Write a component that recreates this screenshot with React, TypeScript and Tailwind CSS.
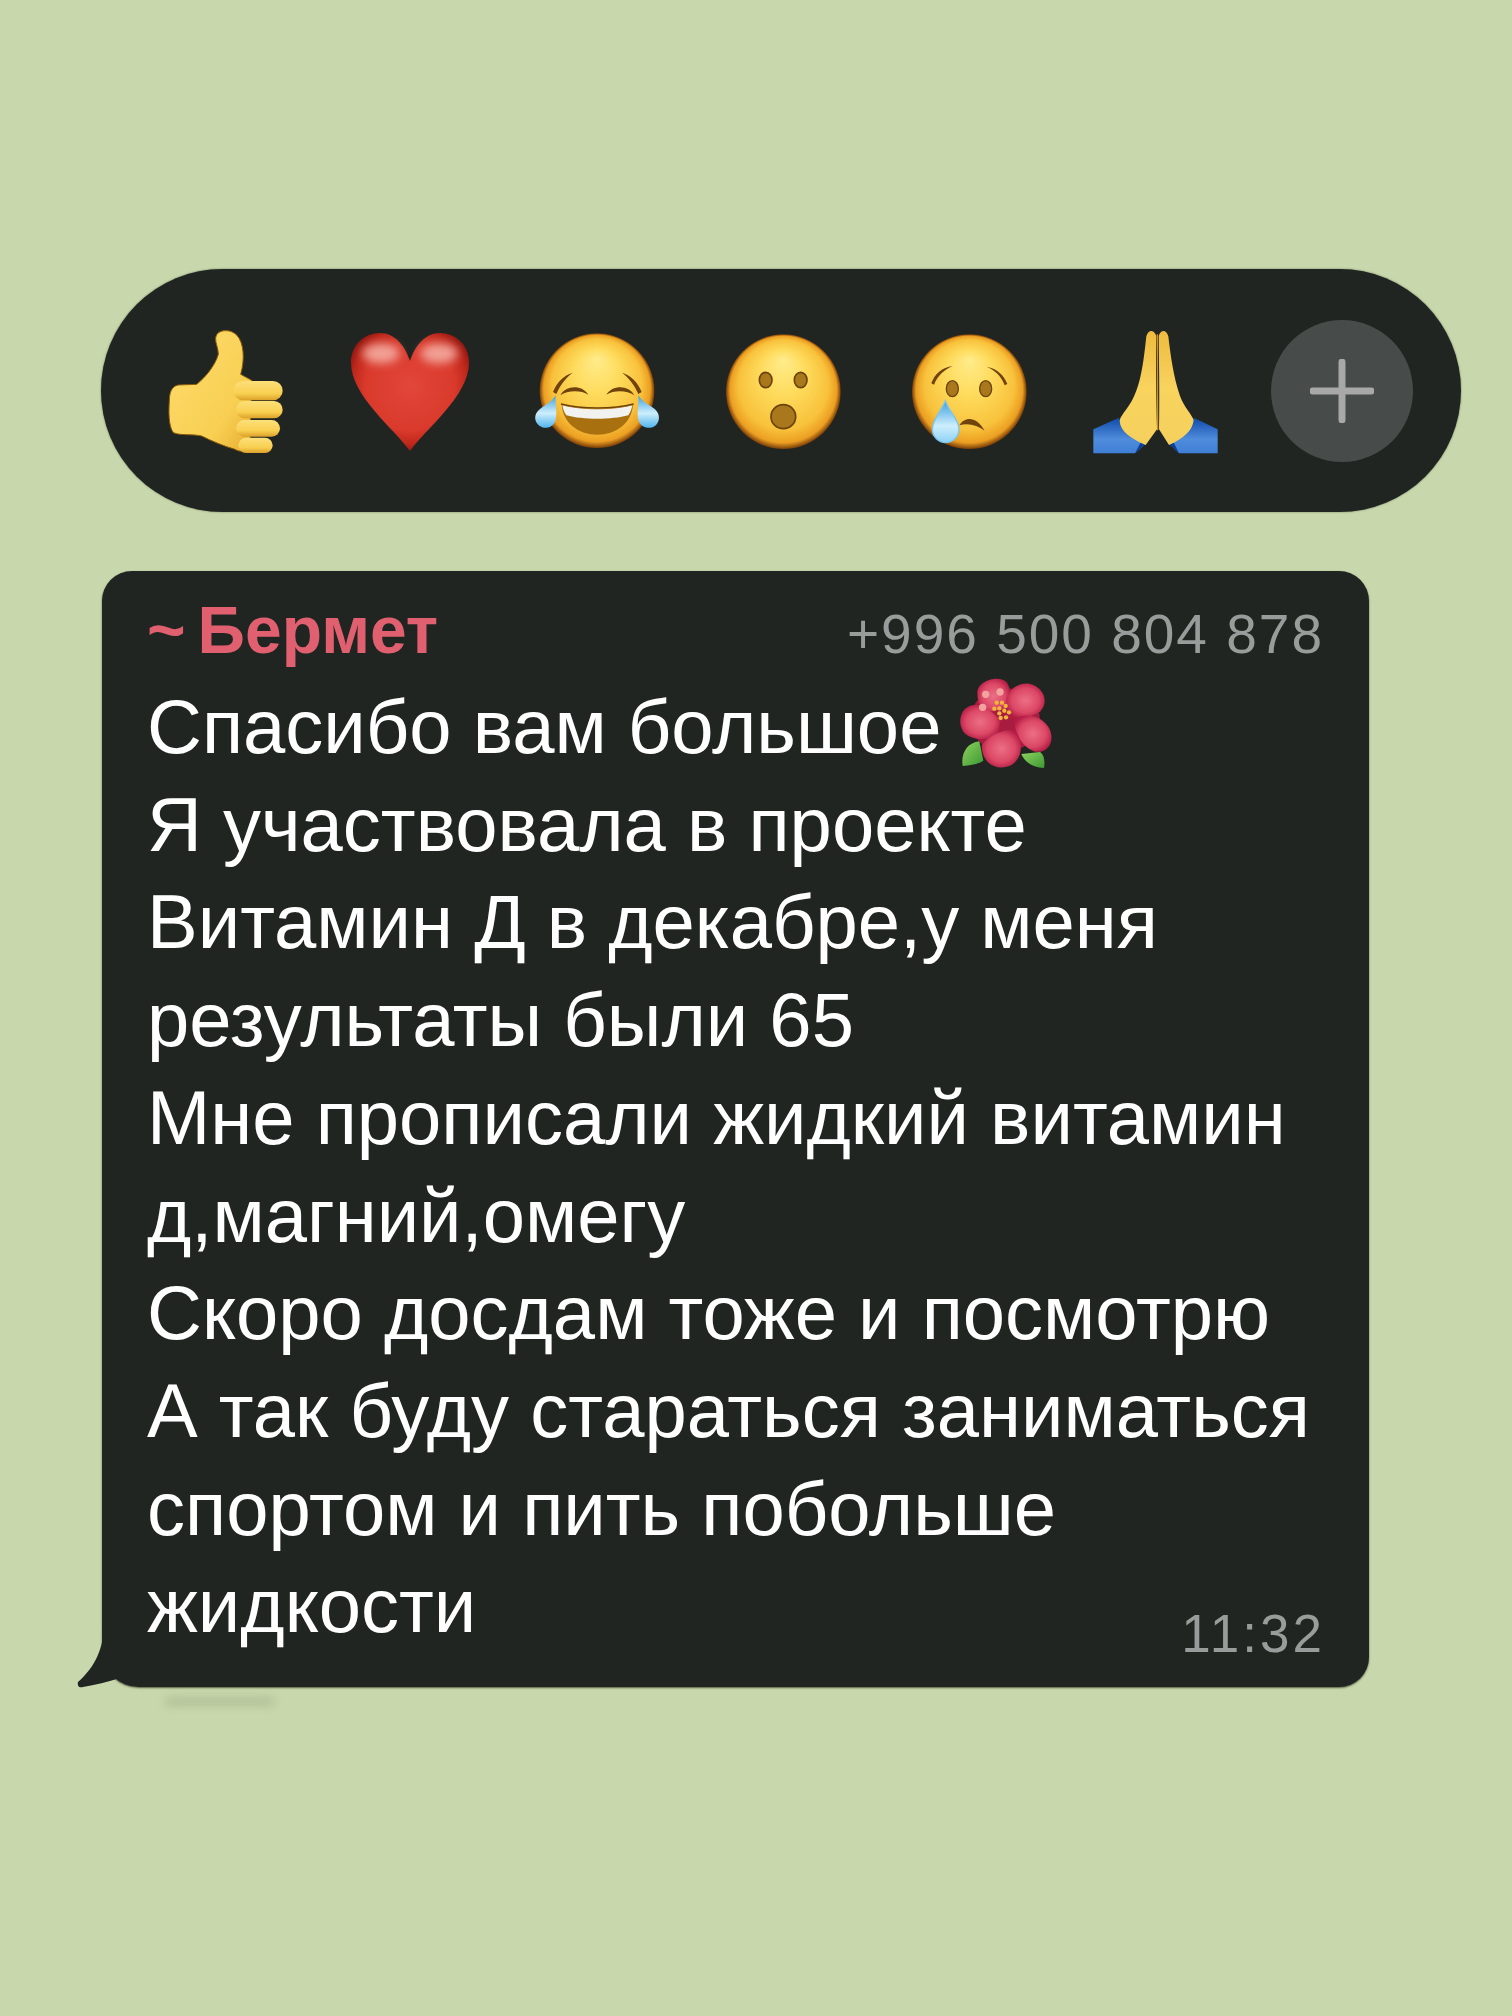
const face = (id: string) => (
  <radialGradient id={id} cx="50%" cy="50%" r="50%" fx="50%" fy="22%">
    <stop offset="0%" stopColor="#ffec8c" />
    <stop offset="40%" stopColor="#fedb5c" />
    <stop offset="78%" stopColor="#f8c23c" />
    <stop offset="93%" stopColor="#ec9f22" />
    <stop offset="100%" stopColor="#7a3e08" />
  </radialGradient>
);

const tear = (id: string) => (
  <linearGradient id={id} x1="0" y1="0" x2="0" y2="1">
    <stop offset="0%" stopColor="#3d9fe0" />
    <stop offset="55%" stopColor="#cdeefc" />
    <stop offset="100%" stopColor="#4fb4ec" />
  </linearGradient>
);

function Thumb() {
  const fingers = [
    [250, 180, 148, 58],
    [258, 240, 140, 52],
    [258, 297, 132, 50],
    [265, 350, 103, 46],
  ];
  return (
    <svg width="150" height="140" viewBox="0 0 450 420" className="shrink-0">
      <defs>
        <linearGradient id="th" x1="0" y1="0" x2="1" y2="1">
          <stop offset="0%" stopColor="#fddc6e" />
          <stop offset="70%" stopColor="#f8cf52" />
          <stop offset="100%" stopColor="#e6ac30" />
        </linearGradient>
        <linearGradient id="fi" x1="0" y1="0" x2="0" y2="1">
          <stop offset="0%" stopColor="#fde07a" />
          <stop offset="65%" stopColor="#f8cf50" />
          <stop offset="100%" stopColor="#dca02a" />
        </linearGradient>
      </defs>
      <path
        d="M58 240 C58 215 65 195 85 192 L140 190 C165 170 195 135 205 100 C205 80 195 65 197 50 C200 25 240 22 260 42 C282 65 285 115 272 160 L305 178 L300 380 C285 395 265 392 255 385 C220 375 185 360 155 345 C125 338 95 345 70 335 C55 315 56 270 58 240Z"
        fill="url(#th)"
        stroke="#8a5a08"
        strokeWidth="3"
      />
      {fingers.map(([x, y, w, h]) => (
        <rect key={y} x={x} y={y} width={w} height={h} rx={h / 2} fill="url(#fi)" />
      ))}
    </svg>
  );
}

function Heart() {
  return (
    <svg width="130" height="130" viewBox="0 0 390 390" className="shrink-0">
      <defs>
        <radialGradient id="he" cx="50%" cy="45%" r="58%">
          <stop offset="0%" stopColor="#e2463a" />
          <stop offset="65%" stopColor="#d93a2c" />
          <stop offset="84%" stopColor="#c0281c" />
          <stop offset="100%" stopColor="#8d140d" />
        </radialGradient>
        <filter id="hb" x="-40%" y="-40%" width="180%" height="180%">
          <feGaussianBlur stdDeviation="14" />
        </filter>
      </defs>
      <path
        d="M195 375 C150 310 18 210 18 110 C18 55 60 21 105 21 C150 21 180 60 195 105 C210 60 240 21 285 21 C330 21 372 55 372 110 C372 210 240 310 195 375Z"
        fill="url(#he)"
      />
      <ellipse cx="108" cy="82" rx="56" ry="30" fill="#f4aba0" opacity="0.9" filter="url(#hb)" />
      <ellipse cx="282" cy="82" rx="56" ry="30" fill="#f4aba0" opacity="0.9" filter="url(#hb)" />
    </svg>
  );
}

function Joy() {
  return (
    <svg width="145" height="130" viewBox="0 0 435 390" className="ml-[5px] shrink-0">
      <defs>
        {face("jf")}
        {tear("jt")}
      </defs>
      <circle cx="216" cy="194" r="172" fill="url(#jf)" />
      <path d="M84 198 C96 168 116 148 143 140 C122 156 106 176 94 204Z" fill="#70430c" />
      <path d="M350 198 C338 168 318 148 291 140 C312 156 328 176 340 204Z" fill="#70430c" />
      <path d="M106 208 C122 176 172 176 190 206 C168 192 128 192 106 208Z" fill="#70430c" />
      <path d="M244 206 C262 176 312 176 328 208 C306 192 266 192 244 206Z" fill="#70430c" />
      <path d="M110 236 C170 252 264 252 324 236 C320 292 272 326 217 326 C162 326 114 292 110 236Z" fill="#a8700f" />
      <path d="M112 238 C170 254 264 254 322 238 C320 250 316 260 310 268 C260 282 174 282 124 268 C118 260 114 250 112 238Z" fill="#f2f2f0" />
      <path d="M108 234 C170 250 264 250 326 234" fill="none" stroke="#6f4209" strokeWidth="5" />
      <path d="M92 208 C90 238 98 256 92 282 C86 304 62 312 44 300 C26 288 26 264 44 250 C62 236 80 228 92 208Z" fill="url(#jt)" />
      <path d="M340 208 C342 238 334 256 340 282 C346 304 372 312 390 300 C406 288 406 264 390 250 C372 236 352 228 340 208Z" fill="url(#jt)" />
    </svg>
  );
}

function Wow() {
  return (
    <svg width="140" height="130" viewBox="0 0 420 390" className="shrink-0">
      <defs>{face("wf")}</defs>
      <circle cx="205" cy="197" r="172" fill="url(#wf)" />
      <ellipse cx="152" cy="162" rx="19" ry="23" fill="#a9781c" stroke="#6b430c" strokeWidth="5" />
      <ellipse cx="257" cy="162" rx="19" ry="23" fill="#a9781c" stroke="#6b430c" strokeWidth="5" />
      <ellipse cx="205" cy="272" rx="37" ry="36" fill="#a9781c" stroke="#6b430c" strokeWidth="5" />
    </svg>
  );
}

function Cry() {
  return (
    <svg width="140" height="130" viewBox="0 0 420 390" className="shrink-0">
      <defs>
        {face("cf")}
        <linearGradient id="ct" x1="0" y1="0" x2="0" y2="1">
          <stop offset="0%" stopColor="#3d9fe0" />
          <stop offset="60%" stopColor="#cdeefc" />
          <stop offset="100%" stopColor="#8ed2f6" />
        </linearGradient>
      </defs>
      <circle cx="208" cy="197" r="172" fill="url(#cf)" />
      <path d="M94 172 C104 144 126 124 158 120 C132 132 114 148 102 176Z" fill="#70430c" />
      <path d="M322 174 C312 148 292 128 260 122 C286 134 304 150 314 178Z" fill="#70430c" />
      <ellipse cx="157" cy="188" rx="18" ry="24" fill="#a9781c" stroke="#6b430c" strokeWidth="4" />
      <ellipse cx="257" cy="188" rx="18" ry="24" fill="#a9781c" stroke="#6b430c" strokeWidth="4" />
      <path d="M178 298 C194 270 230 270 254 314 C232 298 206 290 178 298Z" fill="#70430c" />
      <path d="M136 224 C120 262 97 280 97 310 C97 332 116 350 137 350 C158 350 177 332 177 310 C177 280 150 262 136 224Z" fill="url(#ct)" stroke="#79c6ee" strokeWidth="4" />
    </svg>
  );
}

function Pray() {
  return (
    <svg width="145" height="140" viewBox="0 0 435 420" className="shrink-0">
      <defs>
        <linearGradient id="ph" x1="0" y1="0" x2="0" y2="1">
          <stop offset="0%" stopColor="#eebb3e" />
          <stop offset="50%" stopColor="#f8d35e" />
          <stop offset="100%" stopColor="#f6d05c" />
        </linearGradient>
        <linearGradient id="ps" x1="0" y1="0" x2="0" y2="1">
          <stop offset="0%" stopColor="#0f4aa8" />
          <stop offset="60%" stopColor="#4f8cdc" />
          <stop offset="100%" stopColor="#3f7fd6" />
        </linearGradient>
      </defs>
      <path d="M25 325 L102 290 C112 326 140 350 182 368 L150 397 L25 397Z" fill="url(#ps)" />
      <path d="M398 325 L326 290 C316 326 290 350 252 368 L282 397 L398 397Z" fill="url(#ps)" />
      <path d="M150 397 L182 368 L190 340 L165 368Z" fill="#0d3f9a" />
      <path d="M282 397 L252 368 L244 340 L268 368Z" fill="#0d3f9a" />
      <path d="M214 45 C206 24 190 26 184 46 C178 100 170 190 140 240 C125 268 105 285 104 300 C106 330 135 352 182 372 L216 325 C214 230 212 120 214 45Z" fill="url(#ph)" />
      <path d="M221 45 C228 24 244 26 250 46 C256 100 266 170 285 225 C298 260 322 282 326 298 C322 330 296 352 252 372 L222 325 C224 230 222 120 221 45Z" fill="url(#ph)" />
      <path d="M217 40 L218 328" stroke="#c98e24" strokeWidth="4" />
    </svg>
  );
}

function Flower() {
  return (
    <svg width="130" height="110" viewBox="0 0 390 330" className="-my-[30px] -ml-[1px] inline-block align-[3px]">
      <defs>
        <radialGradient id="fp" cx="50%" cy="50%" r="55%">
          <stop offset="0%" stopColor="#ec6f86" />
          <stop offset="65%" stopColor="#dc4866" />
          <stop offset="100%" stopColor="#b41c44" />
        </radialGradient>
        <linearGradient id="fl" x1="0" y1="0" x2="1" y2="1">
          <stop offset="0%" stopColor="#8fd060" />
          <stop offset="100%" stopColor="#3c9a32" />
        </linearGradient>
      </defs>
      <path d="M68 288 C62 250 82 218 118 214 L130 272 C112 284 90 286 68 288Z" fill="url(#fl)" />
      <path d="M312 294 C316 270 310 252 300 246 L244 252 C254 278 280 292 312 294Z" fill="url(#fl)" />
      <ellipse cx="195" cy="150" rx="105" ry="95" fill="#a81c40" />
      <path d="M112 70 C110 38 160 18 190 30 C215 40 212 80 200 115 L130 130 C118 105 112 90 112 70Z" fill="url(#fp)" />
      <path d="M198 92 C205 55 245 30 280 45 C315 60 325 100 300 125 C270 145 230 145 205 140Z" fill="url(#fp)" />
      <path d="M222 150 C250 125 310 135 330 180 C345 220 320 250 285 245 C250 235 225 195 222 150Z" fill="url(#fp)" />
      <path d="M68 125 C90 95 130 95 180 150 L175 195 C140 215 90 210 70 185 C58 165 58 145 68 125Z" fill="url(#fp)" />
      <path d="M125 225 C150 190 200 175 225 180 C250 215 250 260 215 285 C175 305 125 285 125 225Z" fill="url(#fp)" />
      <circle cx="137" cy="73" r="11" fill="#f2a3a0" />
      <circle cx="180" cy="66" r="11" fill="#f2a3a0" />
      <circle cx="128" cy="112" r="11" fill="#f2a3a0" />
      {[
        [170, 98], [186, 98], [197, 108], [163, 116], [178, 115], [193, 122], [207, 127], [178, 130], [182, 144], [198, 142],
      ].map(([x, y]) => (
        <circle key={`${x}-${y}`} cx={x} cy={y} r="6.5" fill="#eeb53f" />
      ))}
    </svg>
  );
}

const lines = [
  "Я участвовала в проекте",
  "Витамин Д в декабре,у меня",
  "результаты были 65",
  "Мне прописали жидкий витамин",
  "д,магний,омегу",
  "Скоро досдам тоже и посмотрю",
  "А так буду стараться заниматься",
  "спортом и пить побольше",
];

export default function App() {
  return (
    <div className="relative h-[2016px] w-[1512px] overflow-hidden bg-[#c9d8ac] pl-[101px] pt-[269px] font-['Liberation_Sans',sans-serif]">
      <div className="flex h-[243px] w-[1360px] items-center gap-[45px] rounded-full bg-[#202522] pl-[49px] shadow-[0_0_2px_rgba(40,50,30,0.6)]">
        <Thumb />
        <Heart />
        <Joy />
        <Wow />
        <Cry />
        <Pray />
        <div className="-ml-[4px] flex h-[142px] w-[142px] shrink-0 items-center justify-center rounded-full bg-[#474b49]">
          <svg width="64" height="64" viewBox="0 0 64 64">
            <path d="M32 3V61M3 32H61" stroke="#a7a8a7" strokeWidth="7" strokeLinecap="round" />
          </svg>
        </div>
      </div>

      <div className="relative ml-[1px] mt-[59px] w-[1267px] rounded-[30px] rounded-bl-[37px] bg-[#202522] pb-[32px] pl-[45px] pr-[47px] pt-[24px] shadow-[0_1px_2px_rgba(40,40,20,0.7)]">
        <svg width="80" height="75" viewBox="75 1615 80 75" className="absolute -bottom-[5px] -left-[27px]">
          <path d="M104 1625 C103 1650 92 1668 78 1680 C77 1684 79 1686 83 1685 C95 1683 108 1680 120 1676 C128 1680 134 1683 142 1685 L142 1625Z" fill="#202522" />
        </svg>
        <div className="mb-[9px] flex items-baseline justify-between leading-[70px]">
          <span className="text-[66px] font-bold text-[#e0606f]">
            <span className="mr-[12px]">~</span>Бермет
          </span>
          <span className="-mr-[2px] text-[55px] tracking-[2px] text-[#989c9a]">+996 500 804 878</span>
        </div>
        <div className="text-[76px] leading-[97.7px] text-white">
          <div className="whitespace-nowrap">
            Спасибо вам большое
            <Flower />
          </div>
          {lines.map((l) => (
            <div key={l} className="whitespace-nowrap">
              {l}
            </div>
          ))}
          <div className="flex items-end justify-between whitespace-nowrap">
            <span>жидкости</span>
            <span className="-mb-[5px] -mr-[3px] text-[53px] leading-none tracking-[3px] text-[#989c9a]">11:32</span>
          </div>
        </div>
      </div>
      <div className="absolute left-[165px] top-[1697px] h-[9px] w-[110px] rounded-full bg-[#8d9a78] opacity-40 blur-[5px]" />
    </div>
  );
}
